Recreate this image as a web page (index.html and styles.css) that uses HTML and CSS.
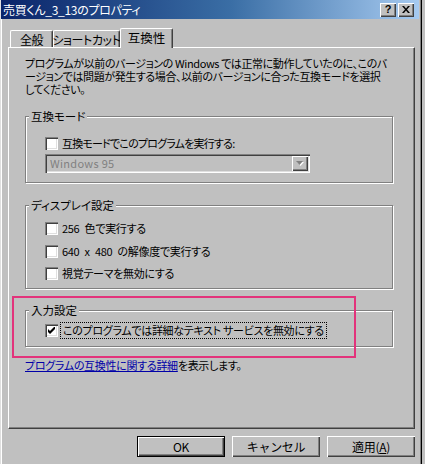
FILE: index.html
```html
<!DOCTYPE html>
<html lang="ja">
<head>
<meta charset="utf-8">
<title>売買くん_3_13のプロパティ</title>
<link rel="stylesheet" href="styles.css">
</head>
<body>
<div class="window">
  <div class="titlebar">
    <span class="title">売買くん_3_13のプロパティ</span>
    <span class="tbtn help">?</span>
    <span class="tbtn close">
      <svg width="8" height="7" viewBox="0 0 8 7"><path d="M0 0h2l2 2.5L6 0h2L5 3.5 8 7H6L4 4.5 2 7H0l3-3.5z" fill="#000"/></svg>
    </span>
  </div>

  <div class="tabs">
    <div class="tab t1">全般</div>
    <div class="tab t2">ショートカット</div>
    <div class="tab t3 selected">互換性</div>
  </div>

  <div class="panel">
    <div class="intro">
      <span class="intro-line">プログラムが以前のバージョンの Windows では正常に動作していたのに、このバ</span>
      <span class="intro-line">ージョンでは問題が発生する場合、以前のバージョンに合った互換モードを選択</span>
      <span class="intro-line">してください。</span>
    </div>

    <div class="group g1">
      <span class="group-title">互換モード</span>
      <div class="row">
        <span class="check"></span>
        <span class="label narrow">互換モードでこのプログラムを実行する:</span>
      </div>
      <div class="select">
        <span class="select-text">Windows 95</span>
        <span class="select-btn">
          <svg width="8" height="5" viewBox="0 0 8 5"><path d="M1 1h7L4.5 5z" fill="#fff"/><path d="M0 0h7L3.5 4z" fill="#808080"/></svg>
        </span>
      </div>
    </div>

    <div class="group g2">
      <span class="group-title">ディスプレイ設定</span>
      <div class="row">
        <span class="check"></span>
        <span class="label spaced">256 色で実行する</span>
      </div>
      <div class="row r2">
        <span class="check"></span>
        <span class="label spaced">640 x 480 の解像度で実行する</span>
      </div>
      <div class="row r3">
        <span class="check"></span>
        <span class="label">視覚テーマを無効にする</span>
      </div>
    </div>

    <div class="group g3">
      <span class="group-title">入力設定</span>
      <div class="row">
        <span class="check checked">
          <svg width="7" height="7" viewBox="0 0 7 7"><path d="M0 2l2 2 5-5v2L2 6 0 4z" fill="#000"/><path d="M0 3l2 2 5-5v2L2 7 0 5z" fill="#000"/></svg>
        </span>
        <span class="label focus">このプログラムでは詳細なテキスト サービスを無効にする</span>
      </div>
    </div>

    <p class="more"><a class="link" href="#">プログラムの互換性に関する詳細</a>を表示します。</p>

    <div class="highlight"></div>
  </div>

  <div class="buttons">
    <button class="btn default">OK</button>
    <button class="btn">キャンセル</button>
    <button class="btn">適用(<u>A</u>)</button>
  </div>
</div>
</body>
</html>
```

FILE: styles.css
```css
* { box-sizing: border-box; }

body {
  margin: 0;
  width: 425px;
  height: 464px;
  overflow: hidden;
  background: #c0c0c0;
  font-family: "Noto Sans CJK JP", "Noto Sans", sans-serif;
  font-size: 11px;
  color: #000;
  font-feature-settings: "palt";
}

.window {
  width: 422px;
  height: 464px;
  background: #c0c0c0;
  border-right: 1px solid #000;
  box-shadow: inset -1px 0 0 #808080, inset 1px 0 0 #dfdfdf, inset 2px 0 0 #fff;
}

.titlebar {
  height: 19px;
  margin: 0 2px 0 1px;
  padding: 0 5px 0 2px;
  display: flex;
  align-items: center;
  gap: 2px;
  background: linear-gradient(to right, #0a246a 0%, #3a6ea5 55%, #a6caf0 100%);
  color: #fff;
}

.title {
  flex: 1;
  line-height: 19px;
  font-size: 12px;
  letter-spacing: -0.3px;
}

.tbtn {
  width: 16px;
  height: 14px;
  background: #c0c0c0;
  color: #000;
  display: flex;
  align-items: center;
  justify-content: center;
  font-family: "Liberation Sans", sans-serif;
  font-weight: bold;
  font-size: 11px;
  line-height: 1;
  box-shadow: inset 1px 1px 0 #fff, inset -1px -1px 0 #404040, inset -2px -2px 0 #808080;
}

.tabs {
  margin-top: 9px;
  padding-left: 10px;
  height: 19px;
  display: flex;
  align-items: flex-end;
  position: relative;
  z-index: 1;
}

.tab {
  height: 17px;
  background: #c0c0c0;
  border-top: 1px solid #fff;
  border-left: 1px solid #fff;
  border-right: 1px solid #404040;
  box-shadow: inset -1px 0 0 #808080;
  border-radius: 2px 2px 0 0;
  display: flex;
  align-items: center;
  justify-content: center;
  line-height: 14px;
  padding-top: 1px;
  white-space: nowrap;
  font-size: 12px;
  letter-spacing: -0.4px;
}

.t1 { width: 43px; }
.t2 { width: 67px; }
.t3 {
  width: 53px;
  height: 20px;
  margin-bottom: -1px;
  padding-bottom: 3px;
  font-size: 12.5px;
  letter-spacing: 0;
}

.panel {
  position: relative;
  margin-left: 8px;
  width: 407px;
  height: 382px;
  border-top: 1px solid #fff;
  border-left: 1px solid #fff;
  border-right: 1px solid #404040;
  border-bottom: 1px solid #404040;
  box-shadow: inset -1px -1px 0 #808080;
  padding: 9px 0 0 16px;
}

.intro {
  display: flex;
  flex-direction: column;
}

.intro-line {
  display: block;
  height: 13px;
  line-height: 13px;
  letter-spacing: -0.4px;
  white-space: nowrap;
}

.group {
  position: relative;
  width: 368px;
  border: 1px solid #808080;
  box-shadow: 1px 1px 0 #fff, inset 1px 1px 0 #fff;
  padding-left: 19px;
}

.g1 { margin-top: 20px; height: 67px; padding-top: 20px; }
.g2 { margin-top: 22px; height: 84px; padding-top: 16px; }
.g3 { margin-top: 21px; height: 37px; padding-top: 13px; }

.group-title {
  position: absolute;
  top: -8px;
  left: 3px;
  padding: 0 2px;
  background: #c0c0c0;
  line-height: 14px;
  font-size: 11.5px;
}

.row {
  display: flex;
  align-items: center;
  height: 13px;
  gap: 4px;
}

.r2 { margin-top: 10px; }
.r3 { margin-top: 9px; }

.label {
  line-height: 13px;
  white-space: nowrap;
  letter-spacing: -0.3px;
}

.label.narrow { letter-spacing: -0.8px; }
.label.spaced { word-spacing: 3px; }

.check {
  width: 13px;
  height: 13px;
  flex: none;
  background: #fff;
  box-shadow: inset 1px 1px 0 #808080, inset 2px 2px 0 #404040, inset -1px -1px 0 #fff, inset -2px -2px 0 #dfdfdf;
  display: flex;
  align-items: center;
  justify-content: center;
}

.focus {
  outline: 1px dotted #000;
  outline-offset: 1px;
  padding: 0 1px;
}

.select {
  margin-top: 4px;
  width: 265px;
  height: 19px;
  background: #c0c0c0;
  box-shadow: inset 1px 1px 0 #808080, inset 2px 2px 0 #404040, inset -1px -1px 0 #fff, inset -2px -2px 0 #dfdfdf;
  display: flex;
  align-items: center;
  padding: 2px;
}

.select-text {
  flex: 1;
  color: #808080;
  padding-left: 3px;
  line-height: 15px;
  letter-spacing: 0.3px;
}

.select-btn {
  width: 16px;
  height: 15px;
  background: #c0c0c0;
  box-shadow: inset 1px 1px 0 #fff, inset -1px -1px 0 #404040, inset -2px -2px 0 #808080;
  display: flex;
  align-items: center;
  justify-content: center;
}

.more {
  margin: 12px 0 0;
  line-height: 13px;
  letter-spacing: -0.3px;
}

.link {
  color: #0000a8;
  text-decoration: underline;
}

.highlight {
  position: absolute;
  left: 3px;
  top: 248px;
  width: 344px;
  height: 62px;
  border: 2px solid #e2337b;
}

.buttons {
  width: 415px;
  margin-top: 7px;
  display: flex;
  justify-content: flex-end;
  gap: 7px;
}

.btn {
  width: 88px;
  height: 21px;
  padding: 0;
  border: none;
  background: #c0c0c0;
  font-family: inherit;
  font-size: 12px;
  color: #000;
  letter-spacing: -0.3px;
  box-shadow: inset 1px 1px 0 #fff, inset -1px -1px 0 #404040, inset -2px -2px 0 #808080;
}

.btn.default {
  border: 1px solid #000;
  box-shadow: inset 1px 1px 0 #fff, inset -1px -1px 0 #404040, inset -2px -2px 0 #808080;
}
```
